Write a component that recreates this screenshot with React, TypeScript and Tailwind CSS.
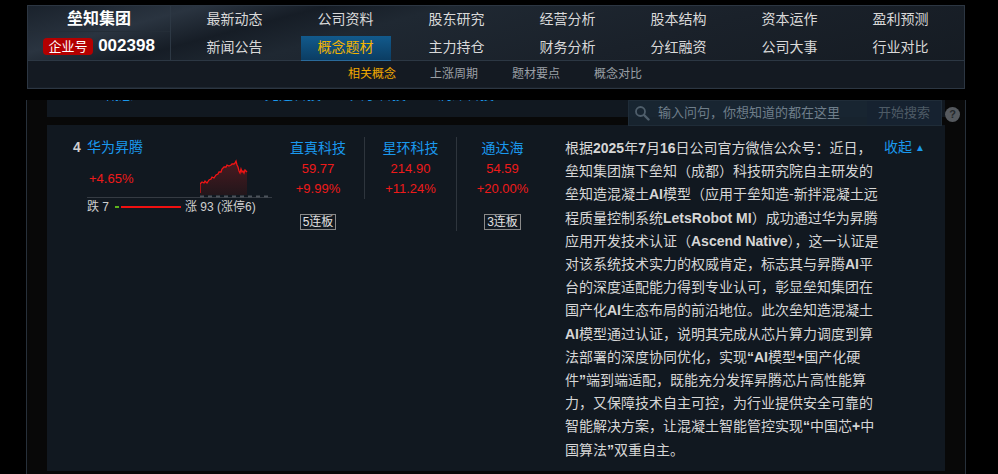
import React from "react";

const row1 = ["最新动态", "公司资料", "股东研究", "经营分析", "股本结构", "资本运作", "盈利预测"];
const row2 = ["新闻公告", "概念题材", "主力持仓", "财务分析", "分红融资", "公司大事", "行业对比"];
const subs = ["相关概念", "上涨周期", "题材要点", "概念对比"];

const stocks = [
  { name: "直真科技", price: "59.77", chg: "+9.99%", badge: "5连板" },
  { name: "星环科技", price: "214.90", chg: "+11.24%", badge: "" },
  { name: "通达海", price: "54.59", chg: "+20.00%", badge: "3连板" },
];

function B({ children }: { children: React.ReactNode }) {
  return <span className="font-bold">{children}</span>;
}

function Spark() {
  const pts: [number, number][] = [
    [0, 36], [0, 27], [2, 25], [4, 26], [5, 24], [7, 26], [9, 23], [11, 22], [12, 20], [14, 21],
    [16, 18], [18, 17], [19, 15], [21, 15], [22, 12], [24, 10], [26, 10], [27, 8], [29, 9], [31, 8],
    [32, 7], [34, 7], [35, 6], [36, 4], [37, 8], [38, 10], [39, 14], [40, 16], [41, 12], [42, 15],
    [43, 14], [44, 16], [45, 13], [46, 14], [47, 15],
  ];
  const line = pts.map((p) => p.join(",")).join(" ");
  const fill = line + " 47,38 0,38";
  return (
    <svg width="72" height="41" viewBox="0 0 72 41" className="block">
      <defs>
        <linearGradient id="sf" x1="0" y1="0" x2="0" y2="1">
          <stop offset="0" stopColor="#4a1a20" />
          <stop offset="1" stopColor="#22161b" />
        </linearGradient>
      </defs>
      <polygon points={fill} fill="url(#sf)" />
      <polyline points={line} fill="none" stroke="#f01414" strokeWidth="1.3" />
      <line x1="0" y1="39.5" x2="72" y2="39.5" stroke="#4c535b" strokeWidth="2" strokeDasharray="4 4" />
    </svg>
  );
}

export default function App() {
  return (
    <div className="relative w-[998px] h-[474px] bg-black overflow-hidden font-['Liberation_Sans','Noto_Sans_CJK_SC',sans-serif]">
      {/* Header */}
      <div className="ml-[27px] mt-[5px] w-[938px] h-[84px] border border-[#2c3642] bg-[linear-gradient(165deg,#1a222c_0%,#2a3440_14%,#161d26_24%,#1f2832_34%,#1a212a_60%,#141a21_100%)]">
        <div className="flex h-[55px] border-b border-[#2c3743]">
          <div className="w-[143px] border-r border-[#2d3844] flex flex-col">
            <div className="h-[26px] flex items-center justify-center text-white font-bold text-[16px] border-b border-[#242d37]">
              垒知集团
            </div>
            <div className="flex-1 flex items-center justify-center gap-[5px]">
              <span className="h-[17px] w-[50px] rounded-[4px] bg-[#b40000] text-white text-[13px] leading-[17px] text-center">
                企业号
              </span>
              <span className="text-white font-bold text-[17px] leading-[20px]">002398</span>
            </div>
          </div>
          <div className="ml-[8px] grid grid-cols-[repeat(7,111px)] grid-rows-[27px_28px]">
            {row1.map((t) => (
              <div key={t} className="flex items-center justify-center text-[14px] text-[#d9d9d9]">
                {t}
              </div>
            ))}
            {row2.map((t) => (
              <div key={t} className="flex items-center justify-center">
                {t === "概念题材" ? (
                  <span className="mt-[2px] w-[90px] h-[25px] flex items-center justify-center text-[14px] text-[#f2b400] bg-[linear-gradient(180deg,#125a8c,#0b3d63)] border-b border-[#2a6a9a]">
                    {t}
                  </span>
                ) : (
                  <span className="text-[14px] text-[#d9d9d9]">{t}</span>
                )}
              </div>
            ))}
          </div>
        </div>
        <div className="h-[26px] flex items-center pl-[320px] gap-[33px] bg-[#141a22]">
          {subs.map((t, i) => (
            <span key={t} className={"text-[12px] w-[49px] " + (i === 0 ? "text-[#f0a800]" : "text-[#9a9fa5]")}>
              {t}
            </span>
          ))}
        </div>
      </div>

      {/* Content */}
      <div className="mt-[11px] ml-[26px] w-[940px] h-[374px] border-x border-[#27303a] bg-[#080808] px-[20px]">
        {/* clipped previous row */}
        <div className="h-[17px] bg-[#111820] overflow-hidden">
          <div className="-translate-y-[16px] flex text-[14px] leading-[20px]">
            <span className="ml-[58px] text-[#1a98ee]">概念</span>
            <span className="ml-[132px] text-[#1a98ee]">光迅科技</span>
            <span className="ml-[29px] text-[#1a98ee]">天孚科技</span>
            <span className="ml-[32px] text-[#1a98ee]">润泽科技</span>
            <span className="ml-[103px] text-[#d4d4d4] whitespace-nowrap">2025年8月公司互动易回复：公司主要客户公司主要</span>
          </div>
        </div>
        <div className="h-[8px]" />
        {/* card */}
        <div className="h-[346px] bg-[#111820] flex pt-[12px]">
          <div className="w-[225px] pl-[26px] flex items-start shrink-0">
            <span className="w-[17px] text-[14px] font-bold leading-[20px] text-[#cfcfcf]">4</span>
            <div className="w-[185px] shrink-0">
              <div className="h-[20px] text-[14px] leading-[20px] text-[#1a98ee]">华为昇腾</div>
              <div className="flex h-[41px] border-b border-[#353b43]">
                <div className="w-[113px] pt-[12px] pl-[2px] text-[13px] leading-[20px] text-[#ee1a1a]">+4.65%</div>
                <Spark />
              </div>
              <div className="flex items-center h-[18px] text-[12px] text-[#cfcfcf]">
                <span>跌 7</span>
                <span className="ml-[6px] w-[4px] h-[2px] bg-[#5cb31c]" />
                <span className="ml-[2px] w-[60px] h-[2px] bg-[#f01010]" />
                <span className="ml-[4px]">涨 93 (涨停6)</span>
              </div>
            </div>
          </div>
          {stocks.map((s, i) => (
            <div key={s.name} className="w-[92px] shrink-0">
              <div className={"flex flex-col items-center " + (i > 0 ? "border-l border-[#2e353d]" : "")}>
                <div className="h-[22px] text-[14px] leading-[22px] text-[#1a98ee]">{s.name}</div>
                <div className="h-[20px] text-[13px] leading-[20px] text-[#ee1a1a]">{s.price}</div>
                <div className="h-[20px] text-[13px] leading-[20px] text-[#ee1a1a]">{s.chg}</div>
                {s.badge && (
                  <div className="mt-[15px] mb-[1px] h-[16px] px-[2px] border border-[#8a8a8a] text-[12px] leading-[14px] text-[#e0e0e0]">
                    {s.badge}
                  </div>
                )}
              </div>
            </div>
          ))}
          <div className="ml-[17px] text-[14px] leading-[23.2px] text-[#d6d6d6] whitespace-nowrap">
            根据<B>2025</B>年<B>7</B>月<B>16</B>日公司官方微信公众号：近日，<br />
            垒知集团旗下垒知（成都）科技研究院自主研发的<br />
            垒知造混凝土<B>AI</B>模型（应用于垒知造-新拌混凝土远<br />
            程质量控制系统<B>LetsRobot MI</B>）成功通过华为昇腾<br />
            应用开发技术认证（<B>Ascend Native</B>），这一认证是<br />
            对该系统技术实力的权威肯定，标志其与昇腾<B>AI</B>平<br />
            台的深度适配能力得到专业认可，彰显垒知集团在<br />
            国产化<B>AI</B>生态布局的前沿地位。此次垒知造混凝土<br />
            <B>AI</B>模型通过认证，说明其完成从芯片算力调度到算<br />
            法部署的深度协同优化，实现<B>“AI</B>模型<B>+</B>国产化硬<br />
            件<B>”</B>端到端适配，既能充分发挥昇腾芯片高性能算<br />
            力，又保障技术自主可控，为行业提供安全可靠的<br />
            智能解决方案，让混凝土智能管控实现<B>“</B>中国芯<B>+</B>中<br />
            国算法<B>”</B>双重自主。
          </div>
          <div className="ml-auto mr-[20px] h-[20px] flex items-center text-[14px] text-[#1a98ee] whitespace-nowrap">
            收起<span className="ml-[3px] text-[10px]">▲</span>
          </div>
        </div>
      </div>

      {/* search overlay */}
      <div className="absolute left-[628px] top-[100px] w-[314px] h-[26px] flex items-center bg-[#1a2733]/90 border border-[#1f2c38]">
        <svg width="16" height="16" viewBox="0 0 16 16" className="ml-[5px]">
          <circle cx="6.5" cy="6.5" r="4.5" fill="none" stroke="#4f5e6b" strokeWidth="1.8" />
          <line x1="10" y1="10" x2="14.5" y2="14.5" stroke="#4f5e6b" strokeWidth="2.4" strokeLinecap="round" />
        </svg>
        <span className="ml-[8px] text-[13px] text-[#6f7e8a]">输入问句，你想知道的都在这里</span>
        <span className="ml-auto w-[74px] h-full flex items-center justify-center bg-[#162230] text-[13px] text-[#4e5b66]">
          开始搜索
        </span>
      </div>
      <div className="absolute left-[945px] top-[107px] w-[15px] h-[15px] rounded-full bg-[#55595e] flex items-center justify-center text-[11px] font-bold text-[#24282c] leading-none">
        ?
      </div>
    </div>
  );
}
